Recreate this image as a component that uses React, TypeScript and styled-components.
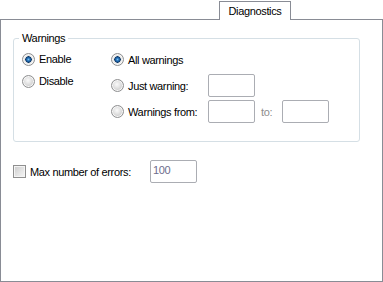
import { createGlobalStyle } from 'styled-components';
import styled from 'styled-components';

const GlobalStyle = createGlobalStyle`
  html, body {
    margin: 0;
    padding: 0;
    background: #ffffff;
  }
  body {
    font-family: 'Liberation Sans', Arial, sans-serif;
    font-size: 11px;
    letter-spacing: -0.35px;
    color: #000000;
  }
`;

const Window = styled.div`
  width: 383px;
  height: 282px;
  display: flex;
  flex-direction: column;
  box-sizing: border-box;
`;

const TabStrip = styled.div`
  display: flex;
  padding: 1px 0 0 219px;
`;

const Tab = styled.div`
  position: relative;
  z-index: 1;
  box-sizing: border-box;
  width: 72px;
  height: 19px;
  margin-bottom: -1px;
  border: 1px solid #898c95;
  border-bottom: none;
  background: #ffffff;
  display: flex;
  align-items: center;
  justify-content: center;
  line-height: 14px;
  padding-bottom: 1px;
`;

const TabPage = styled.div`
  box-sizing: border-box;
  height: 263px;
  border: 1px solid #898c95;
  display: flex;
  flex-direction: column;
  padding: 11px 0 0 12px;
`;

const GroupBox = styled.fieldset`
  box-sizing: border-box;
  width: 347px;
  margin: 0;
  padding: 3px 8px 18px 8px;
  border: 1px solid #d5dfe5;
  border-radius: 3px;
  display: flex;
`;

const Legend = styled.legend`
  padding: 0 3px;
  margin-left: -3px;
  line-height: 14px;
  height: 14px;
`;

const Column = styled.div<{ $width?: number; $gap: number }>`
  display: flex;
  flex-direction: column;
  gap: ${({ $gap }) => $gap}px;
  width: ${({ $width }) => ($width ? `${$width}px` : 'auto')};
`;

const Row = styled.div<{ $height: number }>`
  display: flex;
  align-items: center;
  height: ${({ $height }) => $height}px;
`;

// round option button, drawn with gradients
const Radio = styled.span<{ $checked?: boolean }>`
  box-sizing: border-box;
  flex: none;
  width: 13px;
  height: 13px;
  border-radius: 50%;
  border: 1px solid #8f9091;
  background: ${({ $checked }) =>
    $checked
      ? 'radial-gradient(circle at 50% 50%, #7fc0ee 0, #2f7fc4 1.2px, #174f8c 2.4px, #0e3a68 3px, #dcdcdc 3.4px, #eeeeee 4.5px, #d6d6d6 5.5px)'
      : 'radial-gradient(circle at 45% 40%, #fafafa 0, #e9e9e9 2.5px, #d2d2d2 5.5px)'};
  box-shadow: inset 0 0 0 1px #f7f7f7;
`;

const Check = styled.span`
  box-sizing: border-box;
  flex: none;
  width: 13px;
  height: 13px;
  border: 1px solid #8f8f8f;
  background: linear-gradient(135deg, #cbcbcb 0%, #e4e4e4 55%, #f6f6f6 100%);
  box-shadow: inset 0 0 0 1px #f4f4f4;
`;

const Label = styled.span<{ $width?: number }>`
  margin-left: 4px;
  line-height: 14px;
  white-space: nowrap;
  width: ${({ $width }) => ($width ? `${$width}px` : 'auto')};
`;

const DimLabel = styled.span`
  color: #8d8d8d;
  margin: 0 0 0 6px;
  width: 21px;
  line-height: 14px;
`;

const TextBox = styled.div<{ $disabled?: boolean }>`
  box-sizing: border-box;
  flex: none;
  width: 47px;
  height: 23px;
  border: 1px solid #abadb3;
  border-radius: 2px;
  background: #ffffff;
  padding: 2px 2px;
  line-height: 14px;
  color: ${({ $disabled }) => ($disabled ? '#6d6d8c' : '#000000')};
`;

const ErrorsRow = styled.div`
  display: flex;
  align-items: center;
  height: 23px;
  margin-top: 18px;
`;

const App = (): JSX.Element => (
  <>
    <GlobalStyle />
    <Window>
      <TabStrip>
        <Tab>Diagnostics</Tab>
      </TabStrip>
      <TabPage>
        <GroupBox>
          <Legend>Warnings</Legend>
          <Column $width={89} $gap={0}>
            <Row $height={22}>
              <Radio $checked />
              <Label>Enable</Label>
            </Row>
            <Row $height={22}>
              <Radio />
              <Label>Disable</Label>
            </Row>
          </Column>
          <Column $gap={3}>
            <Row $height={23}>
              <Radio $checked />
              <Label>All warnings</Label>
            </Row>
            <Row $height={23}>
              <Radio />
              <Label $width={80}>Just warning:</Label>
              <TextBox />
            </Row>
            <Row $height={23}>
              <Radio />
              <Label $width={80}>Warnings from:</Label>
              <TextBox />
              <DimLabel>to:</DimLabel>
              <TextBox />
            </Row>
          </Column>
        </GroupBox>
        <ErrorsRow>
          <Check />
          <Label $width={120}>Max number of errors:</Label>
          <TextBox $disabled>100</TextBox>
        </ErrorsRow>
      </TabPage>
    </Window>
  </>
);

export default App;
